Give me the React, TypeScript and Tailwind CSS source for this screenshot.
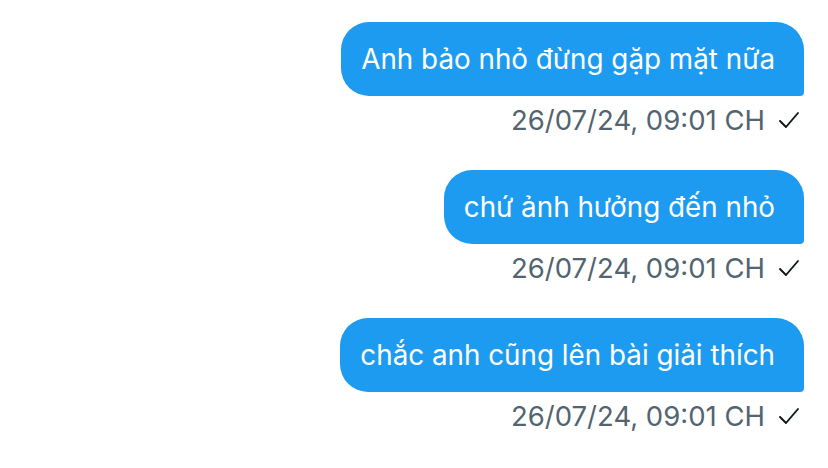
import React from 'react';

const messages = [
  { text: 'Anh bảo nhỏ đừng gặp mặt nữa', time: '26/07/24, 09:01 CH' },
  { text: 'chứ ảnh hưởng đến nhỏ', time: '26/07/24, 09:01 CH' },
  { text: 'chắc anh cũng lên bài giải thích', time: '26/07/24, 09:01 CH' },
];

const Check: React.FC = () => (
  <svg width="22" height="20" viewBox="0 0 22 20" fill="none" className="ml-[13px]">
    <path d="M2 11 L8 17 L20 3" stroke="#0f1419" strokeWidth="1.9" strokeLinecap="round" strokeLinejoin="round" />
  </svg>
);

const App: React.FC = () => {
  return (
    <div className="w-[828px] h-[468px] bg-white overflow-hidden font-['Inter','Noto_Sans',sans-serif]">
      <div className="flex flex-col items-end pt-[22px] pr-[24px]">
        {messages.map((m, i) => (
          <div key={i} className="flex flex-col items-end mb-[33px]">
            <div className="h-[74px] flex items-center bg-[#1d9bf0] text-white rounded-[28px] rounded-br-[4px] pl-[20px] pr-[29px] text-[27.8px] leading-[34px] whitespace-nowrap">
              {m.text}
            </div>
            <div className="flex items-center h-[34px] mt-[7px] pr-[4px] text-[#536471] text-[27.5px] leading-[34px]">
              <span>{m.time}</span>
              <Check />
            </div>
          </div>
        ))}
      </div>
    </div>
  );
};

export default App;
